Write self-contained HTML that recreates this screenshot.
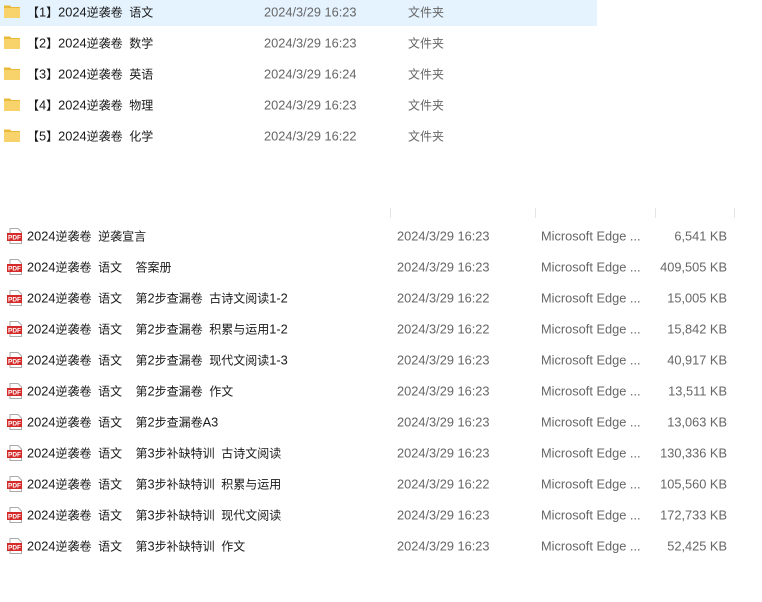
<!DOCTYPE html>
<html><head><meta charset="utf-8"><style>
body{margin:0;width:762px;height:602px;background:#fff;position:relative;overflow:hidden;font-family:"Liberation Sans","Noto Sans CJK SC",sans-serif;font-size:12px;color:#1a1a1a}
.r{position:absolute;left:0;height:31px;width:762px}
.r span{position:absolute;top:50%;transform:translateY(-50%);white-space:nowrap}
.g{color:#666;font-size:12.8px}
b{font-weight:normal;font-size:12.8px}
.sel{background:#e5f3ff;width:597px;height:26px}
.sep{position:absolute;top:208px;width:1px;height:10px;background:#e5e5e5}
</style></head><body>
<div class="sel" style="position:absolute;left:0;top:0"></div>
<div class="sep" style="left:390px"></div><div class="sep" style="left:535px"></div><div class="sep" style="left:655px"></div><div class="sep" style="left:734px"></div>
<div id="f"></div>
<div id="p"></div>
<script>
function L(s){return s.replace(/[!-~]+/g,function(m){return '<b>'+m+'</b>'}).replace(/ /g,"&nbsp;")}
var fo=[["1","语文","16:23"],["2","数学","16:23"],["3","英语","16:24"],["4","物理","16:23"],["5","化学","16:22"]];
var h="";fo.forEach(function(x,i){h+='<div class="r" style="top:'+(-4+31*i)+'px"><svg style="position:absolute;left:4px;top:8px" width="17" height="14"><path d="M0 1.5h6l1.5 1.5H16v11H0z" fill="#e8b93a"/><path d="M0 4h16v10H0z" fill="#f8d26a"/></svg><span style="left:27px">【<b>'+x[0]+'</b>】'+L('2024逆袭卷  '+x[1])+'</span><span class="g" style="left:264px">2024/3/29 '+x[2]+'</span><span class="g" style="left:408px;font-size:12px">文件夹</span></div>'});
document.getElementById("f").innerHTML=h;
var d=[["2024逆袭卷  逆袭宣言","16:23","6,541 KB"],["2024逆袭卷  语文    答案册","16:23","409,505 KB"],["2024逆袭卷  语文    第2步查漏卷  古诗文阅读1-2","16:22","15,005 KB"],["2024逆袭卷  语文    第2步查漏卷  积累与运用1-2","16:22","15,842 KB"],["2024逆袭卷  语文    第2步查漏卷  现代文阅读1-3","16:23","40,917 KB"],["2024逆袭卷  语文    第2步查漏卷  作文","16:23","13,511 KB"],["2024逆袭卷  语文    第2步查漏卷A3","16:23","13,063 KB"],["2024逆袭卷  语文    第3步补缺特训  古诗文阅读","16:23","130,336 KB"],["2024逆袭卷  语文    第3步补缺特训  积累与运用","16:22","105,560 KB"],["2024逆袭卷  语文    第3步补缺特训  现代文阅读","16:23","172,733 KB"],["2024逆袭卷  语文    第3步补缺特训  作文","16:23","52,425 KB"]];
h="";d.forEach(function(x,i){h+='<div class="r" style="top:'+(220+31*i)+'px"><svg style="position:absolute;left:7px;top:8px" width="16" height="16"><path d="M3 0.5h8l3.5 3.5v11.5h-11.5z" fill="#fff" stroke="#aaa"/><rect x="0" y="5" width="15" height="8" fill="#d42a2a"/><text x="7.5" y="11.6" font-size="6.5" font-weight="bold" fill="#fff" text-anchor="middle" font-family="Liberation Sans">PDF</text></svg><span style="left:27px">'+L(x[0])+'</span><span class="g" style="left:397px">2024/3/29 '+x[1]+'</span><span class="g" style="left:541px">Microsoft Edge ...</span><span class="g" style="right:35px">'+x[2]+'</span></div>'});
document.getElementById("p").innerHTML=h;
</script>
</body></html>
